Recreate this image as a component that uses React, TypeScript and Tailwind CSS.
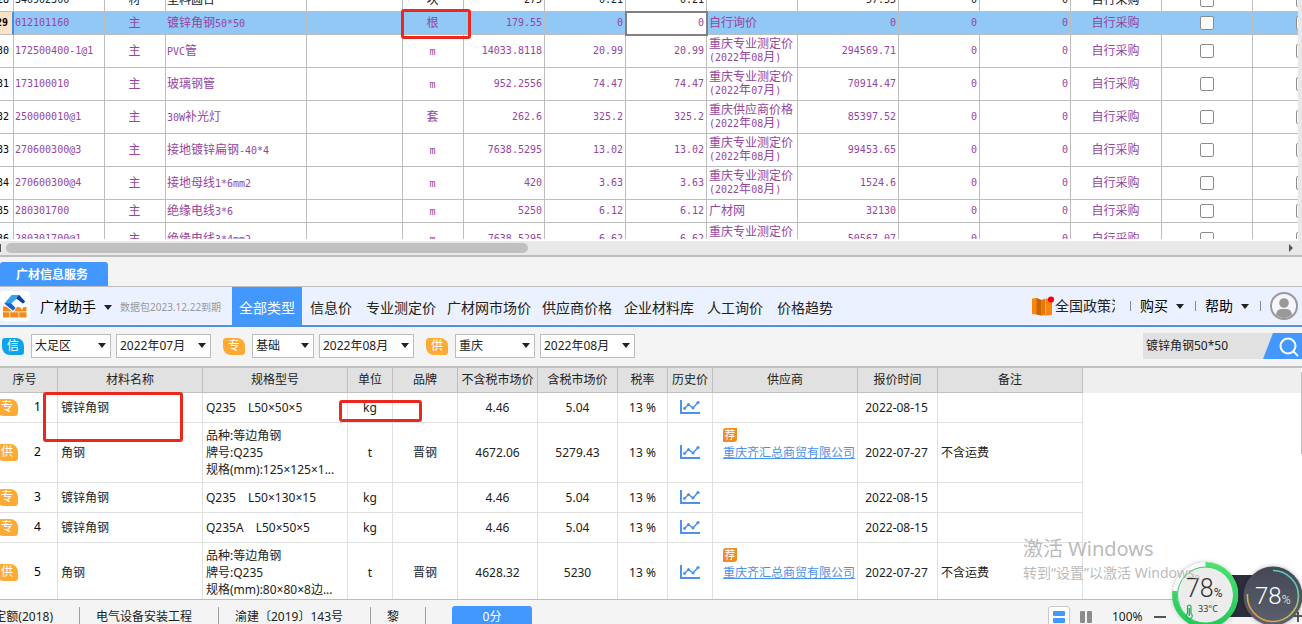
import React from 'react';

type Tone = 'plain' | 'active' | 'linked';

interface Material {
  no: string;
  code: string;
  kind: string;
  name: string;
  unit: string;
  qty: string;
  budget: string;
  market: string;
  source: string[];
  total: string;
  tone: Tone;
  height: string;
}

const SHORT = 'h-[23px]';
const TALL = 'h-[33px]';

const materials: Material[] = [
  { no: '28', code: '340902300', kind: '材', name: '塑料圆台', unit: '块', qty: '275', budget: '0.21', market: '0.21', source: [], total: '57.55', tone: 'plain', height: SHORT },
  { no: '29', code: '012101160', kind: '主', name: '镀锌角钢50*50', unit: '根', qty: '179.55', budget: '0', market: '0', source: ['自行询价'], total: '0', tone: 'active', height: SHORT },
  { no: '30', code: '172500400-1@1', kind: '主', name: 'PVC管', unit: 'm', qty: '14033.8118', budget: '20.99', market: '20.99', source: ['重庆专业测定价', '(2022年08月)'], total: '294569.71', tone: 'linked', height: TALL },
  { no: '31', code: '173100010', kind: '主', name: '玻璃钢管', unit: 'm', qty: '952.2556', budget: '74.47', market: '74.47', source: ['重庆专业测定价', '(2022年07月)'], total: '70914.47', tone: 'linked', height: TALL },
  { no: '32', code: '250000010@1', kind: '主', name: '30W补光灯', unit: '套', qty: '262.6', budget: '325.2', market: '325.2', source: ['重庆供应商价格', '(2022年08月)'], total: '85397.52', tone: 'linked', height: TALL },
  { no: '33', code: '270600300@3', kind: '主', name: '接地镀锌扁钢-40*4', unit: 'm', qty: '7638.5295', budget: '13.02', market: '13.02', source: ['重庆专业测定价', '(2022年08月)'], total: '99453.65', tone: 'linked', height: TALL },
  { no: '34', code: '270600300@4', kind: '主', name: '接地母线1*6mm2', unit: 'm', qty: '420', budget: '3.63', market: '3.63', source: ['重庆专业测定价', '(2022年08月)'], total: '1524.6', tone: 'linked', height: TALL },
  { no: '35', code: '280301700', kind: '主', name: '绝缘电线3*6', unit: 'm', qty: '5250', budget: '6.12', market: '6.12', source: ['广材网'], total: '32130', tone: 'linked', height: SHORT },
  { no: '36', code: '280301700@1', kind: '主', name: '绝缘电线3*4mm2', unit: 'm', qty: '7638.5295', budget: '6.62', market: '6.62', source: ['重庆专业测定价', '(2022年08月)'], total: '50567.07', tone: 'linked', height: TALL },
];

/* Half-width runs use a narrow mono face so that two of them span one ideograph. */
function Grid({ text }: { text: string }) {
  const runs = text.match(/[\x20-\x7e]+|[^\x20-\x7e]+/g) ?? [];
  return (
    <>
      {runs.map((run, i) =>
        /^[\x20-\x7e]/.test(run) ? (
          <span key={i} className="font-['DejaVu_Sans_Mono',monospace] text-[10px]">{run}</span>
        ) : (
          <span key={i}>{run}</span>
        ),
      )}
    </>
  );
}

const materialCols = [
  'w-[14px]', 'w-[91px]', 'w-[61px]', 'w-[141px]', 'w-[96px]', 'w-[61px]', 'w-[81px]', 'w-[81px]',
  'w-[81px]', 'w-[91px]', 'w-[101px]', 'w-[81px]', 'w-[91px]', 'w-[91px]', 'w-[91px]', 'w-[101px]',
];

function Cell({ className = '', children }: { className?: string; children?: React.ReactNode }) {
  return <td className={`border-r border-b border-[#bdbdbd] p-0 ${className}`}>{children}</td>;
}

function Tick({ label }: { label: string }) {
  return (
    <input
      type="checkbox"
      aria-label={label}
      className="mx-auto block size-3.5 appearance-none rounded-[2px] border border-[#8c8c8c] bg-white"
    />
  );
}

function Mark({ className }: { className: string }) {
  return <span aria-hidden className={`pointer-events-none absolute z-10 rounded-[3px] border-[3px] border-[#ea281e] ${className}`} />;
}

function MaterialRow({ m }: { m: Material }) {
  const active = m.tone === 'active';
  const right = 'pr-[2px] pb-px text-right';
  return (
    <tr className={`${m.height} ${active ? 'bg-[#92c8f6]' : 'bg-white'} ${m.tone === 'plain' ? 'text-[#222]' : 'text-[#96459f]'}`}>
      <Cell className={active ? 'border-r-2 border-r-[#3d8fe8] bg-[#fde3c3] font-bold text-black' : 'text-black'}>
        <div className="flex justify-end overflow-hidden pr-1"><Grid text={m.no} /></div>
      </Cell>
      <Cell className="pb-px pl-px"><Grid text={m.code} /></Cell>
      <Cell className="pr-px text-center"><Grid text={m.kind} /></Cell>
      <Cell className="pl-px"><Grid text={m.name} /></Cell>
      <Cell />
      <Cell className="relative pr-px text-center">
        <Grid text={m.unit} />
        {active && <Mark className="-top-[3px] -left-[2px] h-[30px] w-[70px]" />}
      </Cell>
      <Cell className={right}><Grid text={m.qty} /></Cell>
      <Cell className={right}><Grid text={m.budget} /></Cell>
      <Cell className={`${right} ${active ? 'bg-white outline-2 -outline-offset-1 outline-[#808080]' : ''}`}><Grid text={m.market} /></Cell>
      <Cell className="pb-px pl-[2px] leading-[13px]">
        {m.source.map((line) => <div key={line}><Grid text={line} /></div>)}
      </Cell>
      <Cell className={right}><Grid text={m.total} /></Cell>
      <Cell className={right}><Grid text="0" /></Cell>
      <Cell className={right}><Grid text="0" /></Cell>
      <Cell className="pr-px text-center"><Grid text="自行采购" /></Cell>
      <Cell><Tick label={`暂估 ${m.no}`} /></Cell>
      <Cell><Tick label={`锁定 ${m.no}`} /></Cell>
    </tr>
  );
}

function MaterialPane() {
  return (
    <section className="flex shrink-0 border-b-2 border-[#bdbdbd] bg-[#e8e8e8]">
      <div className="min-w-0 flex-1">
        <div className="h-[239px] overflow-hidden bg-white">
          <table className="-mt-[11px] w-[1354px] table-fixed border-separate border-spacing-0 text-[12px] leading-[14px] whitespace-nowrap">
            <colgroup>{materialCols.map((w, i) => <col key={i} className={w} />)}</colgroup>
            <tbody>{materials.map((m) => <MaterialRow key={m.no} m={m} />)}</tbody>
          </table>
        </div>
        <div className="flex h-4 items-center justify-between border-t-2 border-white pr-[5px]">
          <span className="mr-[5px] h-2 w-px bg-[#555]" />
          <span className="h-2.5 w-[522px] rounded-full bg-[#c0c0c0]" />
          <span className="flex-1" />
          <svg className="h-2 w-1" viewBox="0 0 4 8"><path d="M0 0L4 4L0 8Z" fill="#555" /></svg>
        </div>
      </div>
      <div className="w-1 shrink-0" />
    </section>
  );
}

function Caret({ className = '' }: { className?: string }) {
  return (
    <svg aria-hidden className={`h-[5px] w-2 shrink-0 ${className}`} viewBox="0 0 8 5"><path d="M0 0H8L4 5Z" fill="#222" /></svg>
  );
}

function Logo() {
  return (
    <svg aria-hidden className="h-[30px] w-[30px] shrink-0" viewBox="0 0 30 30">
      <rect width="30" height="30" rx="4" fill="#fff" />
      <path d="M12 4H19L25 10.500L23 12.500L16.500 7.500L11 12.500L15.500 17L13 19.500L4.500 12.500Z" fill="#1266d6" />
      <path d="M12 4H19L16.500 7.500L11 12.500L4.500 12.500Z" fill="#2fa5f5" />
      <path d="M19 4L25 10.500L23 12.500L16.500 7.500Z" fill="#0d3fa8" />
      <path d="M11 12.500L15.500 17L13 19.500L4.500 12.500Z" fill="#1560d8" />
      <path d="M3 15.500H6.500L12 20.500H3Z M3 21.200H9.500V26.500H3Z M10.200 21.200H18.500V26.500H10.200Z M19.200 21.200H26.500V26.500H19.200Z M14 20.500L17 16H20L21.800 19L23.500 16H26.500V20.500Z" fill="#f28a1c" />
    </svg>
  );
}

const tabs = [
  { label: '全部类型', width: 'w-[70px]' },
  { label: '信息价', width: 'w-[58px]' },
  { label: '专业测定价', width: 'w-[82px]' },
  { label: '广材网市场价', width: 'w-[94px]' },
  { label: '供应商价格', width: 'w-[82px]' },
  { label: '企业材料库', width: 'w-[82px]' },
  { label: '人工询价', width: 'w-[70px]' },
  { label: '价格趋势', width: 'w-[70px]' },
];

function Divider() {
  return <span className="h-2.5 w-px shrink-0 bg-[#8a8a8a]" />;
}

function Toolbar() {
  return (
    <header className="flex h-10 shrink-0 items-center border-b-2 border-[#5492d8] bg-[#ebf1fe] text-[14px] leading-5 whitespace-nowrap text-[#222]">
      <div className="flex w-[232px] shrink-0 items-center">
        <Logo />
        <button className="ml-2.5 flex items-center gap-2 pt-0.5 text-black">广材助手<Caret /></button>
        <span className="ml-2 pt-0.5 text-[10px] text-[#999]">数据包2023.12.22到期</span>
      </div>
      <nav className="flex h-full shrink-0">
        {tabs.map((t, i) => (
          <button key={t.label} className={`${t.width} h-full pt-1 ${i === 0 ? 'bg-[#4298fe] text-white' : ''}`}>{t.label}</button>
        ))}
      </nav>
      <div className="ml-auto flex items-center pr-1">
        <a href="#policy" className="mr-[15px] flex items-center">
          <svg aria-hidden className="h-5 w-[24px] shrink-0" viewBox="0 0 24 20">
            <path d="M1 2.500L5.500 2L10.500 4V19.500L5.500 18.500L1 18Z" fill="#fb860f" />
            <path d="M5.500 2L10.500 4V19.500L5.500 18.500Z" fill="#c96503" />
            <path d="M10.500 4L14.500 2.500V18L10.500 19.500Z" fill="#e87608" />
            <path d="M15 2.500H21V18.500L15 17.800Z" fill="#fb860f" />
            <path d="M10.500 19.500L14.500 17.800H21V18.500L17 19.500Z" fill="#fb860f" />
            <circle cx="20" cy="3.500" r="3.100" fill="#f00" />
          </svg>
          <span className="w-[60px] overflow-hidden">全国政策法规</span>
        </a>
        <Divider />
        <button className="mx-[9px] mr-[11px] flex items-center gap-2 text-black">购买<Caret /></button>
        <Divider />
        <button className="mx-[9px] mr-[11px] flex items-center gap-2 text-black">帮助<Caret /></button>
        <Divider />
        <button aria-label="账户" className="ml-[9px]">
          <svg className="size-7" viewBox="0 0 28 28">
            <circle cx="14" cy="14" r="13" fill="#f4f6fb" stroke="#999" strokeWidth="2" />
            <circle cx="14" cy="11" r="4.800" fill="#999" />
            <path d="M6 23Q6.500 17.500 11 17H17Q21.500 17.500 22 23Q14 29.500 6 23Z" fill="#999" />
          </svg>
        </button>
      </div>
    </header>
  );
}

function Badge({ text, blue, className = '' }: { text: string; blue?: boolean; className?: string }) {
  return (
    <span className={`flex h-[17px] w-[22px] shrink-0 items-center justify-center rounded-[3px] rounded-tr-lg rounded-bl-lg text-[12px] leading-4 text-white ${blue ? 'bg-[#10a3e8]' : 'bg-[#fdab35]'} ${className}`}>
      {text}
    </span>
  );
}

function Picker({ label, value, width }: { label: string; value: string; width: string }) {
  return (
    <div className={`relative shrink-0 ${width}`}>
      <select aria-label={label} defaultValue={value} className="block h-6 w-full appearance-none border border-[#bdbdbd] bg-white pb-px pl-[3px] text-[12px] text-[#222]">
        <option>{value}</option>
      </select>
      <Caret className="pointer-events-none absolute top-[9px] right-[5px]" />
    </div>
  );
}

const filters = [
  { badge: '信', blue: true, area: '大足区', areaWidth: 'w-[80px]', month: '2022年07月' },
  { badge: '专', blue: false, area: '基础', areaWidth: 'w-[62px]', month: '2022年08月' },
  { badge: '供', blue: false, area: '重庆', areaWidth: 'w-[80px]', month: '2022年08月' },
];

function FilterBar() {
  return (
    <div className="flex h-[41px] shrink-0 items-center border-b-2 border-[#c0c0c0] bg-[#f4f4f4] pb-px pl-0.5">
      <div className="flex gap-3">
        {filters.map((f) => (
          <div key={f.badge} className="flex items-center gap-[5px]">
            <Badge text={f.badge} blue={f.blue} className="mr-0.5" />
            <Picker label={`${f.badge} 地区`} value={f.area} width={f.areaWidth} />
            <Picker label={`${f.badge} 月份`} value={f.month} width="w-[95px]" />
          </div>
        ))}
      </div>
      <form className="ml-auto flex h-[26px] bg-[#e1e1e1]" onSubmit={(e) => e.preventDefault()}>
        <input aria-label="搜索材料" defaultValue="镀锌角钢50*50" className="w-[120px] bg-transparent pl-[3px] text-[12px] text-[#222] outline-none" />
        <button aria-label="搜索" className="w-[39px]">
          <svg className="h-[26px] w-[39px]" viewBox="0 0 39 26">
            <path d="M10 0H39V26H0Z" fill="#4298fe" />
            <circle cx="25" cy="13" r="7.500" fill="none" stroke="#fff" strokeWidth="2" />
            <path d="M30.500 18.500L35 23" stroke="#fff" strokeWidth="2" />
          </svg>
        </button>
      </form>
    </div>
  );
}

interface Quote {
  tag: string;
  no: number;
  name: string;
  spec: string[];
  unit: string;
  brand: string;
  net: string;
  gross: string;
  supplier: string;
  date: string;
  note: string;
}

const quotes: Quote[] = [
  { tag: '专', no: 1, name: '镀锌角钢', spec: ['Q235\u3000L50×50×5'], unit: 'kg', brand: '', net: '4.46', gross: '5.04', supplier: '', date: '2022-08-15', note: '' },
  { tag: '供', no: 2, name: '角钢', spec: ['品种:等边角钢', '牌号:Q235', '规格(mm):125×125×1...'], unit: 't', brand: '晋钢', net: '4672.06', gross: '5279.43', supplier: '重庆齐汇总商贸有限公司', date: '2022-07-27', note: '不含运费' },
  { tag: '专', no: 3, name: '镀锌角钢', spec: ['Q235\u3000L50×130×15'], unit: 'kg', brand: '', net: '4.46', gross: '5.04', supplier: '', date: '2022-08-15', note: '' },
  { tag: '专', no: 4, name: '镀锌角钢', spec: ['Q235A\u3000L50×50×5'], unit: 'kg', brand: '', net: '4.46', gross: '5.04', supplier: '', date: '2022-08-15', note: '' },
  { tag: '供', no: 5, name: '角钢', spec: ['品种:等边角钢', '牌号:Q235', '规格(mm):80×80×8边...'], unit: 't', brand: '晋钢', net: '4628.32', gross: '5230', supplier: '重庆齐汇总商贸有限公司', date: '2022-07-27', note: '不含运费' },
];

const quoteCols = [
  { title: '序号', width: 'w-[66px]' },
  { title: '材料名称', width: 'w-[145px]' },
  { title: '规格型号', width: 'w-[145px]' },
  { title: '单位', width: 'w-[45px]' },
  { title: '品牌', width: 'w-[65px]' },
  { title: '不含税市场价', width: 'w-[80px]' },
  { title: '含税市场价', width: 'w-[80px]' },
  { title: '税率', width: 'w-[50px]' },
  { title: '历史价', width: 'w-[45px]' },
  { title: '供应商', width: 'w-[145px]' },
  { title: '报价时间', width: 'w-[80px]' },
  { title: '备注', width: 'w-[145px]' },
];

function QuoteCell({ className = '', children }: { className?: string; children?: React.ReactNode }) {
  return <td className={`border-r border-b border-[#e0e0e0] p-0 ${className}`}>{children}</td>;
}

function QuoteRow({ q }: { q: Quote }) {
  const first = q.no === 1;
  return (
    <tr className={q.supplier ? 'h-[60px]' : 'h-[30px]'}>
      <QuoteCell className="pb-px">
        <div className="flex items-center gap-4 pl-1 text-black"><Badge text={q.tag} />{q.no}</div>
      </QuoteCell>
      <QuoteCell className="relative pl-[3px]">
        {q.name}
        {first && <Mark className="-top-px -left-[15px] h-[50px] w-[140px]" />}
      </QuoteCell>
      <QuoteCell className="pl-[3px] leading-[17px]">{q.spec.map((s) => <div key={s}>{s}</div>)}</QuoteCell>
      <QuoteCell className="relative text-center">
        {q.unit}
        {first && <Mark className="top-[7px] -left-[9px] h-[22px] w-[83px]" />}
      </QuoteCell>
      <QuoteCell className="text-center">{q.brand}</QuoteCell>
      <QuoteCell className="text-center">{q.net}</QuoteCell>
      <QuoteCell className="text-center">{q.gross}</QuoteCell>
      <QuoteCell className="text-center">13 %</QuoteCell>
      <QuoteCell className="pb-0.5">
        <button aria-label="历史价" className="mx-auto block">
          <svg className="h-3.5 w-5" viewBox="0 0 20 14" fill="none" stroke="#4a92ea">
            <path d="M1 0V13H20" strokeWidth="2" />
            <path d="M4.500 8.500L8.500 4.500L13 8L18 2.500" strokeWidth="1.500" />
            <g fill="#4a92ea" stroke="none">
              <circle cx="4.500" cy="8.500" r="1.400" /><circle cx="8.500" cy="4.500" r="1.500" />
              <circle cx="13" cy="8" r="1.500" /><circle cx="18" cy="2.500" r="1.600" />
            </g>
          </svg>
        </button>
      </QuoteCell>
      <QuoteCell>
        {q.supplier && (
          <div className="flex flex-col items-start gap-0.5 pb-4 pl-2.5">
            <span className="flex size-3.5 items-center justify-center rounded-[3px] rounded-tr-none rounded-bl-none bg-[#f38a1c] text-[11px] leading-3 text-white">荐</span>
            <a href="#supplier" className="leading-[18px] text-[#4a92ea] underline">{q.supplier}</a>
          </div>
        )}
      </QuoteCell>
      <QuoteCell className="pr-0.5 text-center">{q.date}</QuoteCell>
      <QuoteCell className="pl-[3px]">{q.note}</QuoteCell>
    </tr>
  );
}

function QuoteTable() {
  return (
    <div className="relative flex min-h-0 flex-1 overflow-hidden bg-white">
      <table className="-ml-2 w-[1091px] shrink-0 table-fixed border-separate border-spacing-0 self-start text-[12px] leading-[18px] whitespace-nowrap text-[#222]">
        <colgroup>{quoteCols.map((c) => <col key={c.title} className={c.width} />)}</colgroup>
        <thead>
          <tr className="h-[25px]">
            {quoteCols.map((c) => (
              <th key={c.title} className="border-r border-b border-[#c0c0c0] bg-[#e1e1e1] p-0 font-normal">{c.title}</th>
            ))}
          </tr>
        </thead>
        <tbody>{quotes.map((q) => <QuoteRow key={q.no} q={q} />)}</tbody>
      </table>
      <div className="h-[25px] flex-1 bg-[#efefef]" />
      <div className="mt-1 h-[82px] w-px bg-[#bdbdbd]" />
    </div>
  );
}

function StatusBar() {
  const sep = 'border-r border-[#a0a0a0] h-5 flex items-center';
  return (
    <footer className="h-[25px] shrink-0 overflow-hidden border-t border-[#bdbdbd] bg-[#f4f4f4] text-[12px] leading-[18px] whitespace-nowrap text-[#222]">
      <div className="flex h-[33px] items-center">
        <div className={`${sep} w-[80px] justify-end overflow-hidden pr-[26px]`}>定额(2018)</div>
        <div className={`${sep} w-[139px] pl-4`}>电气设备安装工程</div>
        <div className={`${sep} w-[152px] pl-4`}>渝建〔2019〕143号</div>
        <div className={`${sep} w-[55px] pl-4`}>黎</div>
        <button className="ml-[26px] h-[22px] w-[80px] rounded-[3px] bg-[#4298fe] text-white">0分</button>
        <div className="ml-auto flex items-center pr-[136px]">
          <button aria-label="上下布局" className="flex h-[22px] w-[22px] flex-col items-center justify-center gap-0.5 rounded-[3px] border border-[#c8c8c8] bg-white">
            <span className="h-[5px] w-3 rounded-[1px] bg-[#4298fe]" />
            <span className="h-[5px] w-3 rounded-[1px] bg-[#4298fe]" />
          </button>
          <button aria-label="左右布局" className="ml-2.5 flex gap-0.5">
            <span className="h-3 w-[5px] rounded-[1px] bg-[#8c8c8c]" />
            <span className="h-3 w-[5px] rounded-[1px] bg-[#8c8c8c]" />
          </button>
          <span className="ml-5 w-[32px]">100%</span>
          <button aria-label="缩小" className="ml-2.5 flex h-3 w-3 items-center"><span className="block h-0.5 w-3 bg-[#555]" /></button>
        </div>
      </div>
    </footer>
  );
}

function Monitor() {
  return (
    <svg role="img" aria-label="系统监控" className="absolute right-0 bottom-0 h-[66px] w-[134px]" viewBox="0 0 134 66">
      <defs>
        <linearGradient id="ring" x1="0" y1="0" x2="0" y2="1"><stop offset="0" stopColor="#4be06f" /><stop offset="1" stopColor="#21c95a" /></linearGradient>
        <linearGradient id="arc" x1="0.300" y1="1" x2="0.900" y2="0"><stop offset="0" stopColor="#e59a45" /><stop offset="0.350" stopColor="#c7c45a" /><stop offset="1" stopColor="#35d0d8" /></linearGradient>
        <linearGradient id="dark" x1="0" y1="0" x2="0" y2="1"><stop offset="0" stopColor="#444856" /><stop offset="1" stopColor="#5c606c" /></linearGradient>
        <filter id="shade" x="-20%" y="-20%" width="140%" height="140%"><feDropShadow dx="0" dy="0" stdDeviation="2" floodColor="#000" floodOpacity="0.300" /></filter>
      </defs>
      <path d="M126 58H134M130 54V64" stroke="#555" strokeWidth="2" />
      <rect x="40" y="17" width="66" height="42" fill="#2b2e3b" />
      <g filter="url(#shade)">
        <circle cx="37.500" cy="37" r="32.500" fill="#fafafa" />
      </g>
      <circle cx="37.500" cy="37" r="28" fill="#ececec" stroke="#31d160" strokeWidth="1" />
      <path d="M37.500 6.500A30.500 30.500 0 1 1 7 33" fill="none" stroke="url(#ring)" strokeWidth="5" />
      <text x="18" y="39" fill="#333" className="font-['Roboto',sans-serif] text-[25px] font-light">78<tspan className="text-[12px] font-normal">%</tspan></text>
      <path d="M19.500 55.500V48.500A1.800 1.800 0 0 1 23 48.500V55.500A3 3 0 1 1 19.500 55.500Z" fill="none" stroke="#20b455" strokeWidth="1.200" />
      <path d="M21.300 50V58" stroke="#20b455" strokeWidth="1.500" />
      <text x="30" y="54" fill="#333" className="font-['Noto_Sans',sans-serif] text-[9px]">33°C</text>
      <circle cx="105" cy="38" r="29.500" fill="url(#dark)" filter="url(#shade)" />
      <path d="M105 12.500A25.500 25.500 0 1 1 79.500 36" fill="none" stroke="url(#arc)" strokeWidth="1.600" />
      <text x="87" y="46" fill="#fff" className="font-['Roboto',sans-serif] text-[24px] font-light">78<tspan className="text-[12px]">%</tspan></text>
    </svg>
  );
}

export default function App() {
  return (
    <main className="relative flex h-screen flex-col overflow-hidden bg-[#f4f4f4] font-['Noto_Sans','Noto_Sans_CJK_SC',sans-serif]">
      <MaterialPane />
      <div className="flex h-[30px] shrink-0 items-end border-b border-[#bdbdbd]">
        <button className="h-6 w-[108px] rounded-t-[3px] bg-[#4298fe] pt-0.5 pr-1 text-[12px] font-bold text-white">广材信息服务</button>
      </div>
      <Toolbar />
      <FilterBar />
      <QuoteTable />
      <StatusBar />
      <Monitor />
      <div className="pointer-events-none absolute right-[84px] bottom-10 w-[195px] whitespace-nowrap text-[#a8a8a8]/80">
        <div className="text-[20px] leading-[26px]">激活 Windows</div>
        <div className="text-[14px] leading-[22px]">转到“设置”以激活 Windows。</div>
      </div>
    </main>
  );
}
